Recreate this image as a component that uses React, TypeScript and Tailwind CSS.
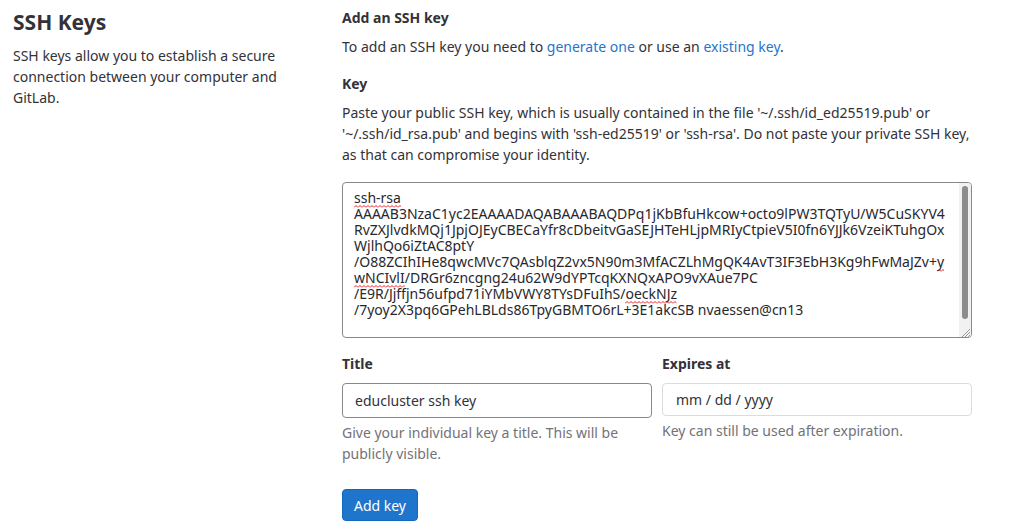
import React from "react";

const Wavy = ({ children }: { children: React.ReactNode }) => (
  <span className="relative">
    {children}
    <svg className="absolute left-0 bottom-[-1px] w-full h-[3px]" aria-hidden="true">
      <defs>
        <pattern id="squiggle" width="4" height="3" patternUnits="userSpaceOnUse">
          <path d="M0 2.5 L2 0.5 L4 2.5" fill="none" stroke="#e01b24" strokeWidth="1" />
        </pattern>
      </defs>
      <rect x="0" y="0" width="100%" height="3" fill="url(#squiggle)" />
    </svg>
  </span>
);

export default function App() {
  return (
    <div
      className="min-h-[529px] w-[1024px] bg-white text-[#333238] text-[14px] leading-[21px] flex"
      style={{ fontFamily: '"Noto Sans", "Open Sans", sans-serif' }}
    >
      <div className="w-[342px] shrink-0 pl-[13px] pr-[40px] pt-[10px]">
        <h4 className="text-[21px] leading-[24px] font-bold">SSH Keys</h4>
        <p className="mt-[11px]">
          SSH keys allow you to establish a secure connection between your computer and GitLab.
        </p>
      </div>
      <div className="w-[630px] shrink-0 pt-[7px]">
        <h5 className="font-bold">Add an SSH key</h5>
        <p className="mt-[8px]">
          To add an SSH key you need to{" "}
          <span className="text-[#1f75cb]">generate one</span> or use an{" "}
          <span className="text-[#1f75cb]">existing key</span>.
        </p>
        <div className="mt-[16px] font-bold">Key</div>
        <p className="mt-[8px]">
          Paste your public SSH key, which is usually contained in the file '~/.ssh/id_ed25519.pub' or
          '~/.ssh/id_rsa.pub' and begins with 'ssh-ed25519' or 'ssh-rsa'. Do not paste your private SSH key,
          as that can compromise your identity.
        </p>
        <div className="mt-[17px] relative h-[156px] border border-[#89888d] rounded-[4px] bg-white overflow-hidden">
          <div className="pl-[11px] pt-[7px] leading-[16px] whitespace-pre text-[#28272d]">
            <div><Wavy>ssh-rsa</Wavy></div>
            <div>AAAAB3NzaC1yc2EAAAADAQABAAABAQDPq1jKbBfuHkcow+octo9lPW3TQTyU/W5CuSKYV4</div>
            <div>RvZXJlvdkMQj1JpjOJEyCBECaYfr8cDbeitvGaSEJHTeHLjpMRIyCtpieV5I0fn6YJJk6VzeiKTuhgOx</div>
            <div>WjlhQo6iZtAC8ptY</div>
            <div>/O88ZCIhIHe8qwcMVc7QAsblqZ2vx5N90m3MfACZLhMgQK4AvT3IF3EbH3Kg9hFwMaJZv+<Wavy>y</Wavy></div>
            <div><Wavy>wNCIvlI</Wavy>/DRGr6zncgng24u62W9dYPTcqKXNQxAPO9vXAue7PC</div>
            <div>/E9R/Jjffjn56ufpd71iYMbVWY8TYsDFuIhS/<Wavy>oeckNJz</Wavy></div>
            <div>/7yoy2X3pq6GPehLBLds86TpyGBMTO6rL+3E1akcSB nvaessen@cn13</div>
          </div>
          <div className="absolute right-0 top-0 w-[12px] h-[143px] bg-[#f1f1f1] flex justify-center pt-[3px]">
            <div className="w-[6px] h-[133px] rounded-full bg-[#8c8c8c]" />
          </div>
          <div className="absolute right-0 bottom-0 w-[12px] h-[11px] bg-[#f1f1f1]">
            <svg width="12" height="11" viewBox="0 0 12 11">
              <path d="M11 3 L3 11 M11 6 L6 11 M11 9 L9 11" stroke="#9a9a9a" strokeWidth="1" />
            </svg>
          </div>
        </div>
        <div className="mt-[15px] grid grid-cols-2 gap-[10px]">
          <div>
            <div className="font-bold">Title</div>
            <div className="mt-[9px] h-[35px] border border-[#89888d] rounded-[4px] px-[12px] flex items-center">
              educluster ssh key
            </div>
            <p className="mt-[4px] text-[#737278]">
              Give your individual key a title. This will be publicly visible.
            </p>
          </div>
          <div>
            <div className="font-bold">Expires at</div>
            <div className="mt-[9px] h-[33px] border border-[#dcdcde] rounded-[4px] pl-[13px] flex items-center">
              mm / dd / yyyy
            </div>
            <p className="mt-[4px] text-[#737278]">Key can still be used after expiration.</p>
          </div>
        </div>
        <button className="mt-[25px] h-[32px] w-[76px] rounded-[4px] bg-[#1f75cb] border border-[#1068bf] text-white text-[14px] flex items-center justify-center">
          Add key
        </button>
      </div>
    </div>
  );
}
